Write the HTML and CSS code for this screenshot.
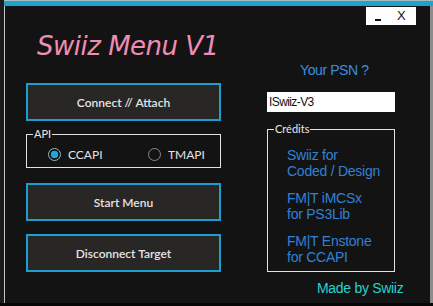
FILE: index.html
```
<!DOCTYPE html>
<html>
<head>
<meta charset="utf-8">
<link rel="stylesheet" href="styles.css">
</head>
<body>
<div class="screen">
  <div class="left-edge"></div>
  <div class="window">
    <div class="topline"></div>
    <div class="titlebar"></div>
    <div class="win-row">
      <div class="frame-line"></div>
      <div class="client">
        <div class="ctrl-row">
          <div class="ctrl-box"><span class="min"></span><span class="close">X</span></div>
        </div>
        <div class="main">
          <div class="col-left">
            <h1 class="title">Swiiz Menu V1</h1>
            <button class="btn btn-connect">Connect // Attach</button>
            <fieldset class="group api">
              <legend>API</legend>
              <div class="radios">
                <label class="radio radio-first"><span class="dot dot-on"></span>CCAPI</label>
                <label class="radio"><span class="dot"></span>TMAPI</label>
              </div>
            </fieldset>
            <button class="btn btn-start">Start Menu</button>
            <button class="btn btn-disc">Disconnect Target</button>
          </div>
          <div class="col-right">
            <div class="psn-label">Your PSN ?</div>
            <div class="psn-input">ISwiiz-V3</div>
            <fieldset class="group credits">
              <legend>Crédits</legend>
              <div class="credit-list">
                <div class="credit">Swiiz for<br>Coded / Design</div>
                <div class="credit">FM|T iMCSx<br>for PS3Lib</div>
                <div class="credit">FM|T Enstone<br>for CCAPI</div>
              </div>
            </fieldset>
            <div class="made">Made by Swiiz</div>
          </div>
        </div>
      </div>
      <div class="right-edge"></div>
    </div>
  </div>
</div>
<div class="bottom"></div>
</body>
</html>
```
FILE: styles.css
```
* { box-sizing: border-box; }
html, body { margin: 0; padding: 0; }
body {
  width: 433px;
  height: 306px;
  overflow: hidden;
  display: flex;
  flex-direction: column;
  background: #050505;
  font-family: "Liberation Sans", Arial, sans-serif;
}
.screen { height: 303px; display: flex; }
.left-edge { width: 4px; background: #1b1b1b; }
.window { flex: 1; display: flex; flex-direction: column; }
.topline { height: 1px; background: #a9b9bf; }
.titlebar { height: 5px; background: #1ca3cb; }
.win-row { flex: 1; display: flex; }
.frame-line { width: 1px; background: #c6c6c6; }
.client { flex: 1; background: #141313; display: flex; flex-direction: column; }
.right-edge { width: 3px; background: #8c8c8c; }
.bottom { height: 3px; background: #050505; }

.ctrl-row { display: flex; justify-content: flex-end; padding-right: 14px; margin-top: 1px; }
.ctrl-box { width: 50px; height: 18px; background: #ffffff; display: flex; padding-left: 9px; }
.min { width: 6px; height: 2px; background: #111; margin-top: 12px; }
.close { margin-left: 16px; font-size: 13px; line-height: 18px; color: #111; }

.main { display: flex; margin-top: 6px; }
.col-left { width: 195px; margin-left: 21px; display: flex; flex-direction: column; }
.col-right { width: 128px; margin-left: 46px; display: flex; flex-direction: column; }

.title {
  margin: 0 0 0 11px;
  font-family: "DejaVu Sans", sans-serif;
  font-style: italic;
  font-weight: normal;
  font-size: 26px;
  line-height: 30px;
  letter-spacing: -0.5px;
  color: #ef8db5;
  white-space: nowrap;
}

.btn {
  display: block;
  width: 100%;
  height: 38px;
  margin: 0;
  padding: 0;
  border: 2px solid #1c9fcf;
  background: #292626;
  color: #e4e4e4;
  font-family: Lato, "Open Sans", sans-serif;
  font-weight: 600;
  font-size: 12px;
}
.btn-connect { margin-top: 22px; }
.btn-start { margin-top: 15px; }
.btn-disc { margin-top: 13px; }

.group {
  margin: 0;
  padding: 0;
  min-width: 0;
  border: 1px solid #e2e2e2;
}
.group legend {
  margin-left: 6px;
  padding: 0 1px;
  font-family: Lato, "Open Sans", sans-serif;
  font-size: 11px;
  line-height: 12px;
  color: #e8e8e8;
}
.api { margin-top: 7px; height: 40px; }
.radios { display: flex; padding: 7px 0 6px 21px; }
.radio {
  display: flex;
  align-items: center;
  height: 14px;
  font-family: Lato, "Open Sans", sans-serif;
  font-size: 12px;
  color: #e2e2e2;
}
.radio-first { width: 100px; }
.dot {
  width: 13px;
  height: 13px;
  border-radius: 50%;
  border: 1px solid #8a8a8a;
  background: #141313;
  margin-right: 7px;
}
.dot-on {
  border-color: #8fb9cc;
  background: radial-gradient(circle, #1ba8da 0 3.5px, #141313 4px);
}

.psn-label {
  margin-top: 31px;
  padding-left: 33px;
  font-size: 14px;
  line-height: 16px;
  letter-spacing: -0.4px;
  color: #3a8fe0;
  white-space: nowrap;
}
.psn-input {
  margin-top: 14px;
  height: 20px;
  background: #ffffff;
  color: #111;
  font-size: 12px;
  letter-spacing: -0.6px;
  line-height: 20px;
  padding-left: 2px;
}
.credits { margin-top: 11px; height: 149px; }
.credit-list {
  display: flex;
  flex-direction: column;
  gap: 11px;
  padding: 12px 0 0 19px;
  font-size: 14px;
  line-height: 16px;
  letter-spacing: -0.25px;
  color: #2f82d8;
  white-space: nowrap;
}
.made {
  margin-top: 8px;
  padding-left: 50px;
  font-size: 14px;
  line-height: 16px;
  letter-spacing: -0.3px;
  color: #23d3d0;
  white-space: nowrap;
}
```
